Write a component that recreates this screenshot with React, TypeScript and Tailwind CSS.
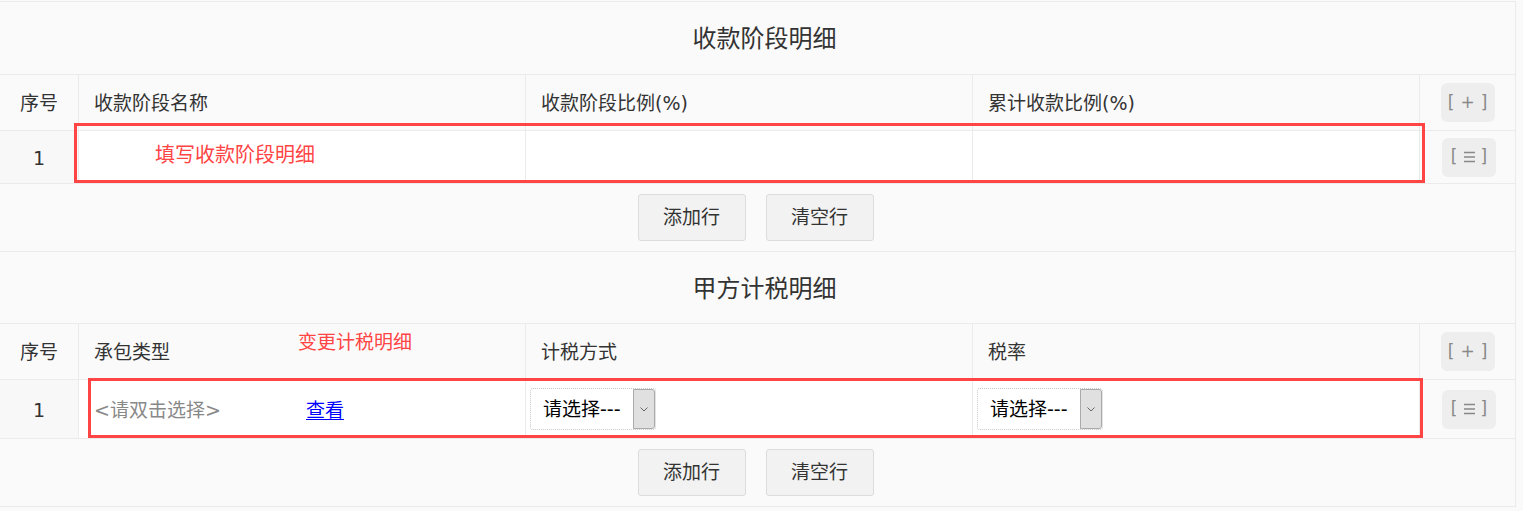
const cols = "grid grid-cols-[79px_447px_447px_447px_95px]";
const font = { fontFamily: '"DejaVu Sans", "Noto Sans CJK SC", sans-serif' };

function SmallBtn({ mark }: { mark: React.ReactNode }) {
  return (
    <div className="w-[54px] h-[39px] rounded-[6px] bg-[#eeeeee] text-[#888] text-[17px] flex items-center justify-center gap-[6px]">
      <span>[</span>
      {mark}
      <span>]</span>
    </div>
  );
}

function Select() {
  return (
    <div className="w-[126px] h-[42px] flex rounded-[3px] border border-dotted border-[#c8c8c8] bg-white">
      <div className="flex-1 flex items-center pl-3 text-[19px] text-black">请选择---</div>
      <div className="w-[22px] h-full bg-[#e0e0e0] border border-[#aaa] rounded-r-[3px] flex items-center justify-center">
        <svg width="8" height="5" viewBox="0 0 8 5">
          <path d="M0.5 0.5 L4 4 L7.5 0.5" fill="none" stroke="#666" strokeWidth="1" />
        </svg>
      </div>
    </div>
  );
}

function Section({
  title,
  titleH,
  dataH,
  headers,
  row,
}: {
  title: string;
  titleH: string;
  dataH: string;
  headers: string[];
  row: React.ReactNode[];
}) {
  return (
    <div>
      <div className={`${titleH} border-b border-[#ebebeb] flex items-center justify-center pl-[14px] pt-[2px] text-[24px] text-[#333]`}>
        {title}
      </div>
      <div className={`${cols} h-[56px] border-b border-[#ebebeb] text-[19px] text-[#333]`}>
        <div className="border-r border-[#ebebeb] flex items-center justify-center pt-[2px]">序号</div>
        {headers.map((h) => (
          <div key={h} className="border-r border-[#ebebeb] flex items-center pl-[15px] pt-[2px]">
            {h}
          </div>
        ))}
        <div className="flex items-center justify-center">
          <SmallBtn mark={<span>+</span>} />
        </div>
      </div>
      <div className={`${cols} ${dataH} border-b border-[#ebebeb] text-[19px] text-[#333]`}>
        <div className="border-r border-[#ebebeb] bg-[#f9f8f9] flex items-center justify-center pt-[2px]">1</div>
        {row.map((c, i) => (
          <div key={i} className="border-r border-[#ebebeb] bg-white flex items-center">
            {c}
          </div>
        ))}
        <div className="flex items-center justify-center pl-[3px]">
          <SmallBtn
            mark={
              <svg width="11" height="12" viewBox="0 0 11 12">
                <path d="M0 1.5 H11 M0 6 H11 M0 10.5 H11" stroke="#888" strokeWidth="1.3" />
              </svg>
            }
          />
        </div>
      </div>
      <div className="h-[68px] border-b border-[#ebebeb] flex items-center justify-center gap-5 pr-[4px]">
        {["添加行", "清空行"].map((b) => (
          <div
            key={b}
            className="w-[108px] h-[47px] rounded-[3px] bg-[#f2f2f2] border border-[#dcdcdc] flex items-center justify-center text-[19px] text-[#333]"
          >
            {b}
          </div>
        ))}
      </div>
    </div>
  );
}

export default function App() {
  return (
    <div className="min-h-[511px] bg-[#fafafa] pt-px" style={font}>
      <div className="relative w-[1516px] border-t border-r border-[#ebebeb]">
        <Section
          title="收款阶段明细"
          titleH="h-[73px]"
          dataH="h-[53px]"
          headers={["收款阶段名称", "收款阶段比例(%)", "累计收款比例(%)"]}
          row={[null, null, null]}
        />
        <Section
          title="甲方计税明细"
          titleH="h-[72px]"
          dataH="h-[59px]"
          headers={["承包类型", "计税方式", "税率"]}
          row={[
            <div className="flex items-center w-full pl-[15px] pt-[2px]">
              <span className="w-[212px] text-[#888]">&lt;请双击选择&gt;</span>
              <span className="text-[#0000ff] underline decoration-1 underline-offset-2">查看</span>
            </div>,
            <div className="pl-1">
              <Select />
            </div>,
            <div className="pl-1">
              <Select />
            </div>,
          ]}
        />

        {/* annotation overlays */}
        <div className="absolute left-[74px] top-[121px] w-[1351px] h-[60px] border-[3px] border-[#f44] pointer-events-none" />
        <div className="absolute left-[155px] top-[138px] text-[20px] text-[#f44]">填写收款阶段明细</div>
        <div className="absolute left-[88px] top-[376px] w-[1335px] h-[60px] border-[3px] border-[#f44] pointer-events-none" />
        <div className="absolute left-[298px] top-[326px] text-[19px] text-[#f44]">变更计税明细</div>
      </div>
    </div>
  );
}
